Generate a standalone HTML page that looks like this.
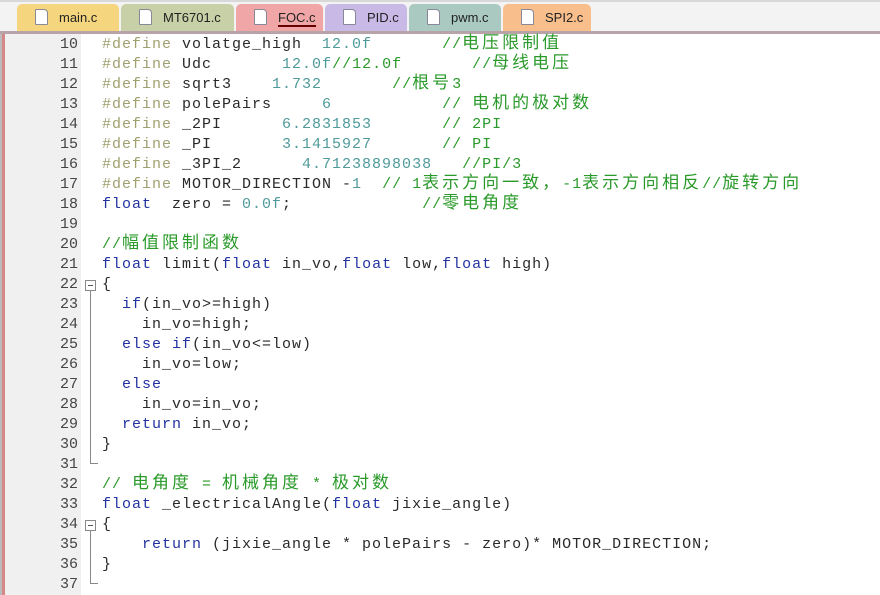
<!DOCTYPE html>
<html><head><meta charset="utf-8"><style>
body{margin:0;width:880px;height:595px;overflow:hidden;background:#fff;font-family:"Liberation Sans","Noto Sans CJK SC",sans-serif;position:relative}
#bar{position:absolute;left:0;top:0;width:880px;height:31px;background:#f3f3f3;border-top:2px solid #d8d8d8;box-sizing:border-box}
#line{position:absolute;left:0;top:31px;width:880px;height:3px;background:#b8a4a8}
.tab{position:absolute;top:4px;height:27px;border-radius:5px 5px 0 0;font-size:13px;color:#222;line-height:27px;box-sizing:border-box;padding-left:42px}
.tab i{position:absolute;left:18px;top:5px;width:11px;height:14px;background:#fff;border:1px solid #889;border-radius:1px 4px 1px 1px}
#left{position:absolute;left:0;top:34px;width:5px;height:561px;background:#d68888;border-left:2px solid #bbb;box-sizing:border-box}
#gut{position:absolute;left:5px;top:34px;width:76px;height:561px;background:#f0f0f0}
#fold{position:absolute;left:81px;top:34px;width:14px;height:561px;background:#fff}
pre{margin:0;position:absolute;left:102px;top:35px;font-family:"Liberation Mono","Noto Sans CJK SC",monospace;font-size:15px;letter-spacing:1px;line-height:20px;color:#2a2a2a}
pre div{height:20px;white-space:pre;overflow:visible}
#nums{position:absolute;left:5px;top:35px;width:73px;text-align:right;font-family:"Liberation Mono",monospace;font-size:15px;line-height:20px;color:#444}
.p{color:#a0a070}.n{color:#4f9a9a}.c{color:#2a9a2a}.k{color:#2233a0}
.z{font-size:17px;letter-spacing:3px;line-height:0}
.box{position:absolute;left:85px;width:9px;height:9px;border:1px solid #888;background:#fff}
.box:after{content:"";position:absolute;left:2px;top:4px;width:5px;height:1px;background:#555}
.vl{position:absolute;left:90px;width:1px;background:#888}
</style></head><body>
<div id="bar"></div>
<div class="tab" style="left:17px;width:102px;background:#f5d57e">main.c<i></i></div>
<div class="tab" style="left:121px;width:113px;background:#c7d0a6">MT6701.c<i></i></div>
<div class="tab" style="left:236px;width:87px;background:#f0a6a6"><span style="border-bottom:2px solid #600">FOC.c</span><i></i></div>
<div class="tab" style="left:325px;width:82px;background:#c9b9e6">PID.c<i></i></div>
<div class="tab" style="left:409px;width:92px;background:#a9c9c1">pwm.c<i></i></div>
<div class="tab" style="left:503px;width:88px;background:#f8bf8c">SPI2.c<i></i></div>
<div id="line"></div>
<div id="left"></div><div id="gut"></div><div id="fold"></div>
<div class="box" style="top:280px"></div>
<div class="vl" style="top:291px;height:172px"></div>
<div class="vl" style="top:463px;width:8px;height:1px"></div>
<div class="box" style="top:520px"></div>
<div class="vl" style="top:531px;height:52px"></div>
<div class="vl" style="top:583px;width:8px;height:1px"></div>
<div id="nums">10<br>11<br>12<br>13<br>14<br>15<br>16<br>17<br>18<br>19<br>20<br>21<br>22<br>23<br>24<br>25<br>26<br>27<br>28<br>29<br>30<br>31<br>32<br>33<br>34<br>35<br>36<br>37</div>
<pre><div><span class="p">#define</span> volatge_high  <span class="n">12.0f</span>       <span class="c">//<span class="z">电压限制值</span></span></div><div><span class="p">#define</span> Udc       <span class="n">12.0f</span><span class="c">//12.0f       //<span class="z">母线电压</span></span></div><div><span class="p">#define</span> sqrt3    <span class="n">1.732</span>       <span class="c">//<span class="z">根号</span>3</span></div><div><span class="p">#define</span> polePairs     <span class="n">6</span>           <span class="c">// <span class="z">电机的极对数</span></span></div><div><span class="p">#define</span> _2PI      <span class="n">6.2831853</span>       <span class="c">// 2PI</span></div><div><span class="p">#define</span> _PI       <span class="n">3.1415927</span>       <span class="c">// PI</span></div><div><span class="p">#define</span> _3PI_2      <span class="n">4.71238898038</span>   <span class="c">//PI/3</span></div><div><span class="p">#define</span> MOTOR_DIRECTION -<span class="n">1</span>  <span class="c">// 1<span class="z">表示方向一致，</span>-1<span class="z">表示方向相反</span>//<span class="z">旋转方向</span></span></div><div><span class="k">float</span>  zero = <span class="n">0.0f</span>;             <span class="c">//<span class="z">零电角度</span></span></div><div> </div><div><span class="c">//<span class="z">幅值限制函数</span></span></div><div><span class="k">float</span> limit(<span class="k">float</span> in_vo,<span class="k">float</span> low,<span class="k">float</span> high)</div><div>{</div><div>  <span class="k">if</span>(in_vo&gt;=high)</div><div>    in_vo=high;</div><div>  <span class="k">else if</span>(in_vo&lt;=low)</div><div>    in_vo=low;</div><div>  <span class="k">else</span></div><div>    in_vo=in_vo;</div><div>  <span class="k">return</span> in_vo;</div><div>}</div><div> </div><div><span class="c">// <span class="z">电角度</span> = <span class="z">机械角度</span> * <span class="z">极对数</span></span></div><div><span class="k">float</span> _electricalAngle(<span class="k">float</span> jixie_angle)</div><div>{</div><div>    <span class="k">return</span> (jixie_angle * polePairs - zero)* MOTOR_DIRECTION;</div><div>}</div></pre>
</body></html>
